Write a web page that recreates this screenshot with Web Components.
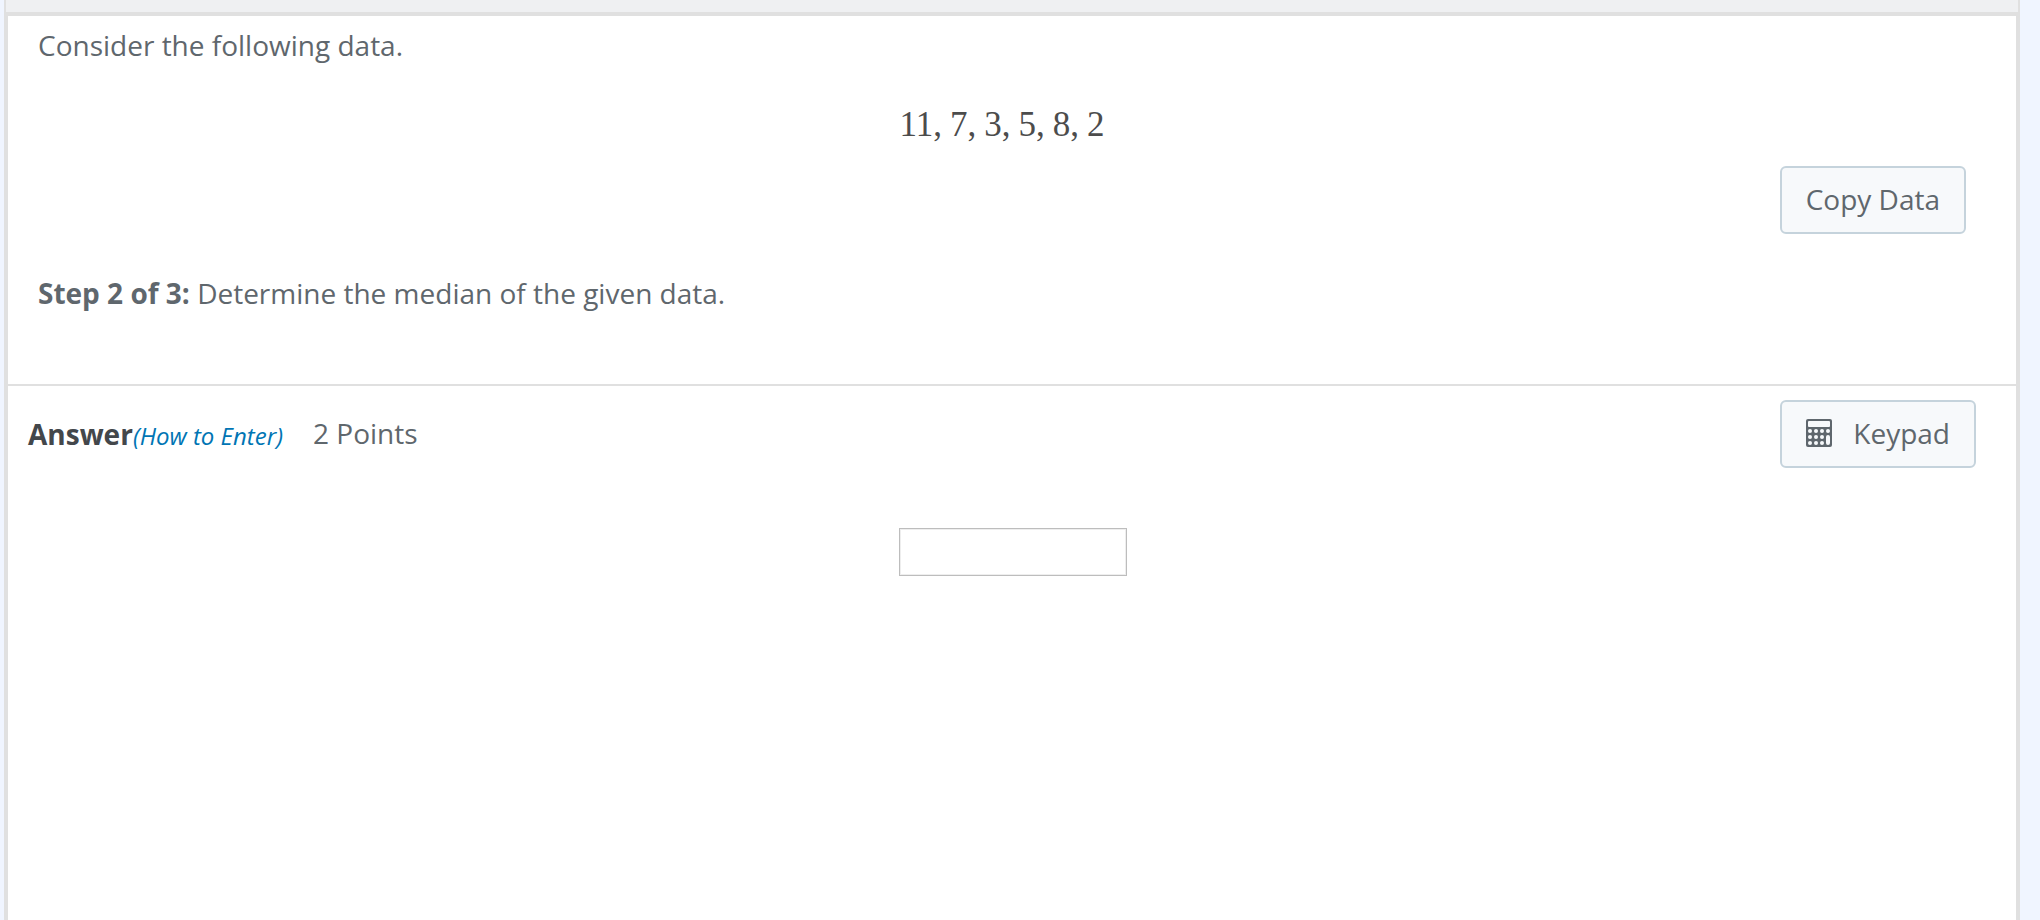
<!DOCTYPE html>
<html lang="en">
<head>
<meta charset="utf-8">
<meta name="viewport" content="width=device-width, initial-scale=1">
<title>Median practice</title>
<style>
  html, body { margin: 0; }
  body {
    min-height: 100vh;
    display: flex;
    background: #f0f5ff;
    color: #5f676d;
    font: 28px/38px "Open Sans", sans-serif;
  }
</style>
</head>
<body>
<lesson-frame>
  <question-panel>
    <span slot="intro">Consider the following data.</span>
    <data-series slot="data" values="11 7 3 5 8 2"></data-series>
    <tool-button slot="action">Copy Data</tool-button>
    <strong slot="step">Step 2 of 3:</strong>
    <span slot="task">Determine the median of the given data.</span>
  </question-panel>
  <answer-panel points="2"></answer-panel>
</lesson-frame>
<script>
  class BaseElement extends HTMLElement {
    constructor() {
      super();
      this.attachShadow({ mode: "open" }).innerHTML = this.constructor.markup;
    }
  }

  customElements.define("lesson-frame", class extends BaseElement {
    static markup = `
      <style>
        :host { flex: 1; display: flex; flex-direction: column; box-sizing: border-box;
          margin: 0 20px 0 4px; border: solid #e0e0e0; border-width: 0 2px; background: #eff0f2; }
        main { flex: 1; margin-top: 12px; border: solid #e0e0e0; border-width: 4px 2px 0; background: #fff; }
      </style>
      <main><slot></slot></main>`;
  });

  customElements.define("tool-button", class extends BaseElement {
    static markup = `
      <style>
        :host { display: block; }
        button { display: flex; align-items: center; gap: 21px; padding: 12px 24px 14px;
          border: 2px solid #c5d3dc; border-radius: 6px; background: #f7f9fb;
          color: inherit; font: inherit; white-space: nowrap; cursor: pointer; }
        ::slotted(svg) { display: block; width: 26px; height: 28px; }
      </style>
      <button type="button"><slot name="icon"></slot><slot></slot></button>`;
  });

  customElements.define("data-series", class extends BaseElement {
    static markup = `
      <style>
        :host { display: flex; justify-content: center; gap: 8px;
          color: #4c4c4c; font: 35px/44px "Liberation Serif", serif; }
      </style>`;
    connectedCallback() {
      const values = this.getAttribute("values").split(" ");
      values.forEach((value, i) => {
        const item = document.createElement("span");
        item.textContent = i < values.length - 1 ? value + "," : value;
        this.shadowRoot.append(item, " ");
      });
    }
  });

  customElements.define("question-panel", class extends BaseElement {
    static markup = `
      <style>
        :host { display: block; padding: 10px 50px 72px 30px; border-bottom: 2px solid #e0e0e0; }
        p { margin: 0; }
        .data { margin-top: 39px; }
        .action { display: flex; justify-content: flex-end; margin-top: 19px; }
        .step { margin-top: 40px; }
      </style>
      <p><slot name="intro"></slot></p>
      <div class="data"><slot name="data"></slot></div>
      <div class="action"><slot name="action"></slot></div>
      <p class="step"><slot name="step"></slot> <slot name="task"></slot></p>`;
  });

  customElements.define("answer-panel", class extends BaseElement {
    static markup = `
      <style>
        :host { display: block; padding: 14px 40px 40px 20px; }
        header { display: flex; align-items: center; }
        h2 { margin: 0; padding-top: 2px; color: #43474b; font-size: 28px; line-height: 44px; }
        a { color: #0075b4; font-size: 24px; font-weight: 400; font-style: italic; text-decoration: none; }
        .points { margin-left: 30px; padding-bottom: 2px; }
        tool-button { margin-left: auto; }
        .entry { display: flex; justify-content: center; margin-top: 60px; padding-left: 22px; }
        input { width: 228px; height: 48px; box-sizing: border-box; padding: 4px 8px;
          border: 1px solid #bdbdbd; box-shadow: inset 0 0 0 1px #eee; background: #fff;
          color: inherit; font: inherit; }
      </style>
      <header>
        <h2><label for="answer">Answer</label><a href="#how-to-enter">(How to Enter)</a></h2>
        <span class="points"></span>
        <tool-button>
          <svg slot="icon" viewBox="0 0 26 28" aria-hidden="true">
            <rect width="26" height="28" rx="2" fill="#5f676d"/>
            <g fill="#f7f9fb">
              <rect x="2" y="2" width="22" height="6" rx="1"/>
              <circle cx="4" cy="12" r="2"/><circle cx="10" cy="12" r="2"/><circle cx="16" cy="12" r="2"/><circle cx="22" cy="12" r="2"/>
              <circle cx="4" cy="18" r="2"/><circle cx="10" cy="18" r="2"/><circle cx="16" cy="18" r="2"/>
              <circle cx="4" cy="24" r="2"/><circle cx="10" cy="24" r="2"/><circle cx="16" cy="24" r="2"/>
              <rect x="20" y="16" width="4" height="10" rx="2"/>
            </g>
          </svg>Keypad</tool-button>
      </header>
      <div class="entry"><input id="answer" type="text" autocomplete="off"></div>`;
    connectedCallback() {
      this.shadowRoot.querySelector(".points").textContent = this.getAttribute("points") + " Points";
    }
  });
</script>
</body>
</html>
